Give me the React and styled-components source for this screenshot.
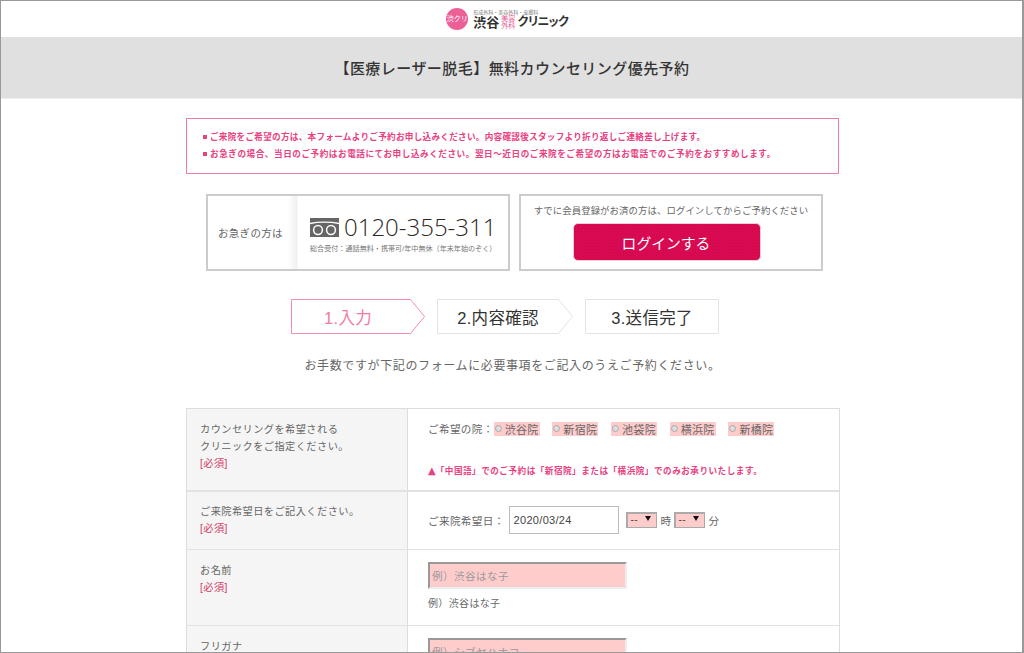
import React from 'react';
import styled, { createGlobalStyle } from 'styled-components';

const Global = createGlobalStyle`
  html, body { margin: 0; padding: 0; background: #fff; }
  body { font-family: "Liberation Sans", "Noto Sans CJK JP", sans-serif; color: #666; overflow: hidden; }
  * { box-sizing: border-box; }
`;

const Frame = styled.div`
  width: 1024px;
  height: 653px;
  border: 1px solid #999;
  border-width: 1px 2px 1px 1px;
  overflow: hidden;
  background: #fff;
`;

const Header = styled.header`
  height: 36px;
  display: flex;
  justify-content: center;
  align-items: center;
  padding-right: 9px;
  gap: 5px;
`;

const LogoMark = styled.div`
  width: 22px;
  height: 22px;
  border-radius: 50%;
  background: #ec5f97;
  color: #fff;
  font-size: 7px;
  line-height: 8px;
  display: flex;
  align-items: center;
  justify-content: center;
  white-space: nowrap;
`;

const LogoText = styled.div`
  display: flex;
  flex-direction: column;
  color: #333;
`;

const LogoSub = styled.div`
  font-size: 5px;
  line-height: 6px;
  color: #777;
  white-space: nowrap;
`;

const LogoMain = styled.div`
  display: flex;
  align-items: center;
  gap: 2px;
  font-weight: 700;
  line-height: 15px;
  white-space: nowrap;
`;

const LogoKanji = styled.span`
  font-size: 13px;
`;

const LogoGrid = styled.span`
  width: 14px;
  font-size: 7px;
  line-height: 7px;
  color: #e8558f;
  font-weight: 400;
  white-space: normal;
  word-break: break-all;
`;

const LogoKana = styled.span`
  font-size: 12px;
  letter-spacing: -1.9px;
`;

const Band = styled.h1`
  margin: 0;
  height: 62px;
  background: #e0e0e0;
  border-bottom: 1px solid #eee;
  display: flex;
  align-items: center;
  justify-content: center;
  font-size: 15px;
  font-weight: 500;
  color: #333;
  letter-spacing: 0.45px;
  padding-left: 1px;
`;

const Main = styled.main`
  width: 653px;
  margin-left: 185px;
  padding-top: 19px;
`;

const Notice = styled.ul`
  list-style: none;
  margin: 0;
  height: 56px;
  border: 1px solid #ef7ba5;
  padding: 10px 0 0 16px;
  color: #e8417f;
  font-size: 8.6px;
  font-weight: 700;
  line-height: 17px;
`;

const NoticeItem = styled.li`
  white-space: nowrap;
  letter-spacing: ${(p) => p.$spacing}px;
  &::before {
    content: "";
    display: inline-block;
    width: 4px;
    height: 4px;
    background: #e8417f;
    margin-right: 3px;
    vertical-align: 1px;
  }
`;

const Contact = styled.div`
  display: flex;
  gap: 9px;
  margin: 20px 0 0 20px;
`;

const Card = styled.section`
  width: 304px;
  height: 77px;
  border: 2px solid #ccc;
  background: #fff;
`;

const PhoneCard = styled(Card)`
  display: flex;
  align-items: center;
`;

const PhoneLabel = styled.div`
  width: 90px;
  height: 100%;
  display: flex;
  align-items: center;
  padding-left: 10px;
  font-size: 10.5px;
  letter-spacing: 0.3px;
  color: #666;
  background: linear-gradient(to right, #fff 80px, #f0f0f0 89px, #fff 90px);
`;

const PhoneBody = styled.div`
  flex: 1;
  padding: 1px 0 0 12px;
`;

const PhoneRow = styled.div`
  display: flex;
  align-items: center;
  gap: 5px;
  height: 30px;
`;

const PhoneNumber = styled.span`
  font-family: "Open Sans", "Liberation Sans", sans-serif;
  font-size: 24px;
  font-weight: 300;
  line-height: 30px;
  color: #2e2725;
  white-space: nowrap;
`;

const PhoneNote = styled.div`
  font-size: 7.1px;
  line-height: 10px;
  margin-top: 2px;
  color: #777;
  white-space: nowrap;
`;

const LoginCard = styled(Card)`
  display: flex;
  flex-direction: column;
  align-items: center;
  padding-top: 8px;
`;

const LoginLead = styled.p`
  margin: 0;
  font-size: 9.4px;
  line-height: 14px;
  letter-spacing: 0.1px;
  color: #666;
  white-space: nowrap;
`;

const LoginButton = styled.button`
  align-self: flex-start;
  margin: 5px 0 0 52px;
  padding-left: 4px;
  width: 188px;
  height: 38px;
  border: 1px solid #eccdd8;
  border-radius: 5px;
  background-color: #d90a52;
  background-image: radial-gradient(#c90a4c 0.6px, transparent 0.7px);
  background-size: 3px 3px;
  color: #fff;
  font-family: inherit;
  font-size: 14.8px;
`;

const Steps = styled.ol`
  list-style: none;
  margin: 28px 0 0 105px;
  padding: 0;
  display: flex;
  gap: 12px;
`;

const Step = styled.li`
  position: relative;
  width: ${(p) => p.$width}px;
  height: 35px;
  display: flex;
  align-items: center;
  justify-content: center;
  padding-right: ${(p) => p.$pad}px;
  font-size: 16.5px;
  letter-spacing: 0.3px;
  color: ${(p) => (p.$active ? '#f27aa6' : '#333')};
`;

const StepShape = styled.svg`
  position: absolute;
  inset: 0;
`;

const StepText = styled.span`
  position: relative;
`;

const Lead = styled.p`
  margin: 23px 0 0;
  text-align: center;
  font-size: 12px;
  line-height: 18px;
  letter-spacing: 0.62px;
  color: #666;
`;

const FormTable = styled.div`
  margin-top: 33px;
  width: 654px;
  border: 1px solid #ddd;
  border-bottom: 0;
`;

const Row = styled.div`
  display: grid;
  grid-template-columns: 221px 1fr;
  height: ${(p) => p.$height}px;
  border-bottom: ${(p) => (p.$thick ? 2 : 1)}px solid #e2e2e2;
`;

const Label = styled.div`
  background: #f5f5f5;
  border-right: 1px solid #ddd;
  padding: ${(p) => p.$top ?? 12}px 0 0 13px;
  font-size: 10.2px;
  line-height: 17px;
  letter-spacing: 0.45px;
  color: #666;
`;

const Required = styled.div`
  color: #d23a66;
`;

const Field = styled.div`
  padding: ${(p) => p.$top ?? 12}px 0 0 20px;
  font-size: 10.6px;
  color: #666;
  letter-spacing: 0.35px;
`;

const Line = styled.div`
  display: flex;
  align-items: center;
  white-space: nowrap;
`;

const Clinic = styled.label`
  display: inline-flex;
  align-items: center;
  width: 46px;
  height: 14px;
  background: #ffcccc;
  margin-right: 12.7px;
  gap: 3px;
  font-size: 11px;
  letter-spacing: 0.3px;
`;

const Radio = styled.span`
  flex: none;
  width: 7px;
  height: 7px;
  margin-left: 1px;
  border-radius: 50%;
  background: #ddd;
  border: 1px solid #aaa;
`;

const Caution = styled.p`
  margin: 28px 0 0;
  color: #e8417f;
  font-size: 8.6px;
  font-weight: 700;
  letter-spacing: 0.5px;
  white-space: nowrap;
`;

const CautionMark = styled.span`
  font-family: "DejaVu Sans", sans-serif;
  font-size: 10px;
  line-height: 1;
  letter-spacing: 0;
`;

const DateInput = styled.input`
  width: 110px;
  height: 28px;
  margin: 0 7px 0 4px;
  padding: 0 4px;
  border: 1px solid #bbb;
  font-family: "Liberation Sans", sans-serif;
  font-size: 11px;
  color: #444;
  letter-spacing: 0.3px;
`;

const SelectBox = styled.span`
  position: relative;
  display: inline-block;
  width: 31px;
  height: 16px;
  margin: 0 4px 0 0;
  background: #ffcccc;
  border: 2px solid #aaa;
  border-width: 2px 1px 1px 2px;
  font-family: "Liberation Sans", sans-serif;
  font-size: 10px;
  line-height: 12px;
  padding-left: 3px;
  color: #444;
  &::after {
    content: "";
    position: absolute;
    right: 5px;
    top: 2px;
    border: 3px solid transparent;
    border-top: 5px solid #111;
    border-bottom: 0;
  }
`;

const Unit = styled.span`
  margin-right: 2px;
`;

const TextInput = styled.input`
  display: block;
  width: 199px;
  height: 27px;
  padding: 0 2px;
  background: #ffcccc;
  border: 2px solid #eee;
  border-top-color: #999;
  border-left-color: #999;
  font-family: inherit;
  font-size: 10.6px;
  letter-spacing: 0.4px;
  &::placeholder { color: #999; opacity: 1; }
`;

const Example = styled.p`
  margin: 8px 0 0;
  font-size: 10px;
  line-height: 14px;
  color: #666;
`;

function FreeDial() {
  return (
    <svg width="29" height="19" viewBox="0 0 29 19">
      <rect width="29" height="19" fill="#666" />
      <path d="M0 5.5 C8 3.6 21 3.6 29 5.5" stroke="#fff" strokeWidth="1.3" fill="none" />
      <circle cx="8" cy="12" r="4.4" fill="none" stroke="#fff" strokeWidth="1.5" />
      <circle cx="21" cy="12" r="4.4" fill="none" stroke="#fff" strokeWidth="1.5" />
    </svg>
  );
}

const clinics = ['渋谷院', '新宿院', '池袋院', '横浜院', '新橋院'];

const steps = [
  { text: '1.入力', active: true, width: 134, arrow: true, pad: 20 },
  { text: '2.内容確認', width: 136, arrow: true, pad: 14 },
  { text: '3.送信完了', width: 134, pad: 0 },
];

function StepItem({ text, active, width, arrow, pad }) {
  const w = width - 0.5;
  const points = arrow
    ? `0.5,0.5 ${w - 14},0.5 ${w},17.5 ${w - 14},34.5 0.5,34.5`
    : `0.5,0.5 ${w},0.5 ${w},34.5 0.5,34.5`;
  return (
    <Step $width={width} $pad={pad} $active={active}>
      <StepShape width={width} height="35">
        <polygon points={points} fill="#fff" stroke={active ? '#f58db2' : '#e3e3e3'} />
      </StepShape>
      <StepText>{text}</StepText>
    </Step>
  );
}

export default function App() {
  return (
    <Frame>
      <Global />
      <Header>
        <LogoMark>渋クリ</LogoMark>
        <LogoText>
          <LogoSub>形成外科・美容外科・皮膚科</LogoSub>
          <LogoMain>
            <LogoKanji>渋谷</LogoKanji>
            <LogoGrid>美容外科</LogoGrid>
            <LogoKana>クリニック</LogoKana>
          </LogoMain>
        </LogoText>
      </Header>
      <Band>【医療レーザー脱毛】無料カウンセリング優先予約</Band>
      <Main>
        <Notice>
          <NoticeItem $spacing={0.28}>ご来院をご希望の方は、本フォームよりご予約お申し込みください。内容確認後スタッフより折り返しご連絡差し上げます。</NoticeItem>
          <NoticeItem $spacing={0.55}>お急ぎの場合、当日のご予約はお電話にてお申し込みください。翌日〜近日のご来院をご希望の方はお電話でのご予約をおすすめします。</NoticeItem>
        </Notice>
        <Contact>
          <PhoneCard>
            <PhoneLabel>お急ぎの方は</PhoneLabel>
            <PhoneBody>
              <PhoneRow>
                <FreeDial />
                <PhoneNumber>0120-355-311</PhoneNumber>
              </PhoneRow>
              <PhoneNote>総合受付：通話無料・携帯可/年中無休（年末年始のぞく）</PhoneNote>
            </PhoneBody>
          </PhoneCard>
          <LoginCard>
            <LoginLead>すでに会員登録がお済の方は、ログインしてからご予約ください</LoginLead>
            <LoginButton type="button">ログインする</LoginButton>
          </LoginCard>
        </Contact>
        <Steps>
          {steps.map((s) => (
            <StepItem key={s.text} {...s} />
          ))}
        </Steps>
        <Lead>お手数ですが下記のフォームに必要事項をご記入のうえご予約ください。</Lead>
        <FormTable>
          <Row $height={83} $thick>
            <Label>
              カウンセリングを希望される
              <br />
              クリニックをご指定ください。
              <Required>[必須]</Required>
            </Label>
            <Field>
              <Line>
                ご希望の院：
                {clinics.map((c) => (
                  <Clinic key={c}>
                    <Radio />
                    {c}
                  </Clinic>
                ))}
              </Line>
              <Caution>
                <CautionMark>▲</CautionMark>「中国語」でのご予約は「新宿院」または「横浜院」でのみお承りいたします。
              </Caution>
            </Field>
          </Row>
          <Row $height={58}>
            <Label $top={11}>
              ご来院希望日をご記入ください。
              <Required>[必須]</Required>
            </Label>
            <Field $top={14}>
              <Line>
                ご来院希望日：
                <DateInput defaultValue="2020/03/24" />
                <SelectBox>--</SelectBox>
                <Unit>時</Unit>
                <SelectBox>--</SelectBox>
                <Unit>分</Unit>
              </Line>
            </Field>
          </Row>
          <Row $height={76}>
            <Label>
              お名前
              <Required>[必須]</Required>
            </Label>
            <Field>
              <TextInput placeholder="例）渋谷はな子" />
              <Example>例）渋谷はな子</Example>
            </Field>
          </Row>
          <Row $height={76}>
            <Label>フリガナ</Label>
            <Field>
              <TextInput placeholder="例）シブヤハナコ" />
            </Field>
          </Row>
        </FormTable>
      </Main>
    </Frame>
  );
}
